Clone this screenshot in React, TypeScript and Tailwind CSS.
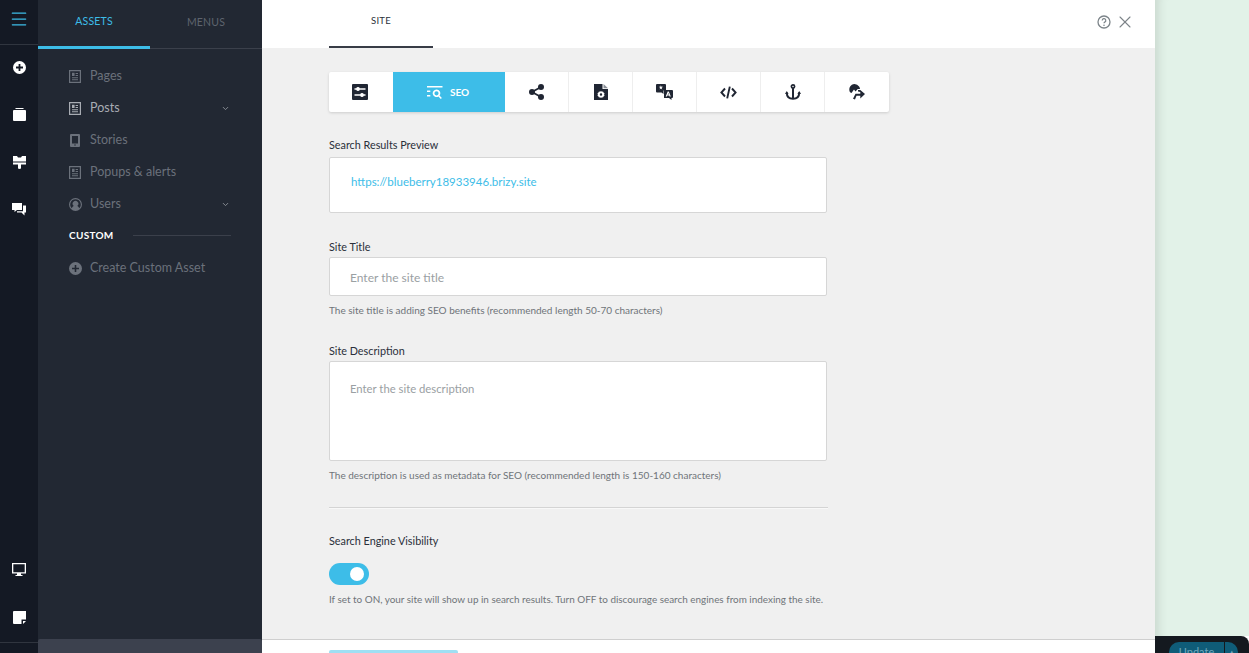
import { ChevronDown, X, Menu } from "lucide-react";

const font = "font-['Lato','Noto_Sans',sans-serif]";

function DocIcon() {
  return (
    <svg viewBox="0 0 12 13" className="w-3 h-[13px]">
      <path fill="currentColor" fillRule="evenodd" d="M0 0h12v13H0zM1.200 1.200v10.600h9.600V1.200zM3 2.800h2.600v3.200H3zM6.600 3H9v1H6.600zM6.600 5H9v1H6.600zM3 7.300h6v1H3zM3 9.200h6v1H3z" />
    </svg>
  );
}

function PhoneIcon() {
  return (
    <svg viewBox="0 0 10 13" className="w-[10px] h-[13px] ml-px">
      <path fill="currentColor" fillRule="evenodd" d="M1 0h8a1 1 0 0 1 1 1v11a1 1 0 0 1-1 1H1a1 1 0 0 1-1-1V1a1 1 0 0 1 1-1zM2 2v7.500h6V2zM4.200 10.400v1.200h1.600v-1.200z" />
    </svg>
  );
}

function UserIcon() {
  return (
    <svg viewBox="0 0 13 13" className="w-[13px] h-[13px]">
      <path fill="currentColor" fillRule="evenodd" d="M6.500 0a6.500 6.500 0 1 1 0 13a6.500 6.500 0 0 1 0-13zM6.500 1.300a5.200 5.200 0 0 0-3.700 8.900c.4-1.200 1.200-2 2-2.300a2.800 2.800 0 1 1 3.400 0c.8.300 1.600 1.100 2 2.300a5.200 5.200 0 0 0-3.700-8.900z" />
    </svg>
  );
}

function SideItem({ icon, label, bright, chevron }: { icon: React.ReactNode; label: string; bright?: boolean; chevron?: boolean }) {
  return (
    <div className={`flex items-center h-8 pl-[31px] pr-[32px] text-[12.500px] ${bright ? "text-[#a8acb3]" : "text-[#6b717b]"}`}>
      <span className="w-[21px] flex items-center justify-start">{icon}</span>
      <span className="flex-1">{label}</span>
      {chevron && <ChevronDown size={9} strokeWidth={2.500} className="text-[#8b9097]" />}
    </div>
  );
}

function RailIcon({ children, className = "" }: { children: React.ReactNode; className?: string }) {
  return <div className={`flex justify-center text-white ${className}`}>{children}</div>;
}

function TabCell({ children }: { children: React.ReactNode }) {
  return <div className="w-16 h-full flex items-center justify-center border-r border-[#eeeeee] last:border-r-0 text-[#202633]">{children}</div>;
}

function Field({ label, gap, children, help }: { label: string; gap: string; children: React.ReactNode; help?: string }) {
  return (
    <div className="w-[498px]">
      <div className={`text-[10.800px] leading-[14px] text-[#2a2f3a] ${gap}`}>{label}</div>
      {children}
      {help && <div className="text-[10px] leading-[14px] text-[#6f7479] mt-[7px]">{help}</div>}
    </div>
  );
}

export default function App() {
  return (
    <div className={`flex w-[1249px] h-[653px] overflow-hidden ${font}`}>
      {/* icon rail */}
      <div className="w-[38px] bg-[#141924] flex flex-col shrink-0">
        <div className="h-[45px] border-b border-[#30353f] flex items-center justify-center pb-[6px]">
          <Menu size={20} strokeWidth={1.500} className="text-[#3dbde8]" />
        </div>
        <RailIcon className="mt-[16px]">
          <svg viewBox="0 0 13 13" className="w-[13px] h-[13px]">
            <path fill="currentColor" fillRule="evenodd" d="M6.500 0a6.500 6.500 0 1 1 0 13a6.500 6.500 0 0 1 0-13zM5.600 3v2.600H3v1.800h2.600V10h1.800V7.400H10V5.600H7.400V3z" />
          </svg>
        </RailIcon>
        <RailIcon className="mt-[34px]">
          <svg viewBox="0 0 13 13" className="w-[13px] h-[13px]">
            <path fill="currentColor" d="M2.500 0h8v1h-8zM1 2h11a1 1 0 0 1 1 1v9a1 1 0 0 1-1 1H1a1 1 0 0 1-1-1V3a1 1 0 0 1 1-1z" />
          </svg>
        </RailIcon>
        <RailIcon className="mt-[35px]">
          <svg viewBox="0 0 13 13" className="w-[13px] h-[13px]">
            <path fill="currentColor" d="M0 0h4l1 1.500h3L9 0h4v5.500H0zM0 6.500h13V8.500H8V12.500L6.500 13 5 12.500V8.500H0z" />
          </svg>
        </RailIcon>
        <RailIcon className="mt-[34px]">
          <svg viewBox="0 0 14 13" className="w-[14px] h-[13px]">
            <path fill="currentColor" d="M0 0h10v7H5L2.500 9V7H0zM11 2.500h3V9.500h-1.500v3L9.500 9.500H5V8.200h6z" />
          </svg>
        </RailIcon>
        <div className="flex-1" />
        <RailIcon className="mb-[35px]">
          <svg viewBox="0 0 14 13" className="w-[14px] h-[13px]">
            <path fill="currentColor" fillRule="evenodd" d="M0 0h14v10.500H9V12h1.500v1h-7v-1H5v-1.500H0zM1.300 1.300v7.900h11.400V1.300z" />
          </svg>
        </RailIcon>
        <RailIcon className="mb-[18px]">
          <svg viewBox="0 0 13 13" className="w-[13px] h-[13px]">
            <path fill="currentColor" d="M1 0h12v8.500H8.500V13H1a1 1 0 0 1-1-1V1a1 1 0 0 1 1-1zM10 10h3l-3 3z" />
          </svg>
        </RailIcon>
        <div className="h-[11px] border-t border-[#30353f]" />
      </div>

      {/* sidebar */}
      <div className="w-[224px] bg-[#222833] flex flex-col shrink-0">
        <div className="flex h-[49px] text-[10.500px] tracking-[0.200px] border-b border-[#3b404b]">
          <div className="w-[112px] h-[49px] flex items-center justify-center pb-[3px] text-[#3dbde8] border-b-[3px] border-[#3dbde8]">ASSETS</div>
          <div className="w-[112px] flex items-center justify-center pb-[3px] text-[#5e646e]">MENUS</div>
        </div>
        <div className="pt-[11px]">
          <SideItem icon={<DocIcon />} label="Pages" />
          <SideItem icon={<DocIcon />} label="Posts" bright chevron />
          <SideItem icon={<PhoneIcon />} label="Stories" />
          <SideItem icon={<DocIcon />} label="Popups & alerts" />
          <SideItem icon={<UserIcon />} label="Users" chevron />
        </div>
        <div className="flex items-center h-[32px] pl-[31px] pr-[31px] pb-[1px]">
          <span className="text-[10px] font-bold tracking-[0.300px] text-white">CUSTOM</span>
          <span className="flex-1 ml-[19px] border-t border-[#3b404b]" />
        </div>
        <SideItem
          icon={
            <svg viewBox="0 0 13 13" className="w-[13px] h-[13px]">
              <path fill="currentColor" fillRule="evenodd" d="M6.500 0a6.500 6.500 0 1 1 0 13a6.500 6.500 0 0 1 0-13zM5.700 3v2.700H3v1.600h2.700V10h1.600V7.300H10V5.700H7.300V3z" />
            </svg>
          }
          label="Create Custom Asset"
        />
        <div className="flex-1" />
        <div className="h-[14px] bg-[#3c414e] rounded-t-[2px]" />
      </div>

      {/* main panel */}
      <div className="w-[893px] flex flex-col shrink-0 bg-[#f0f0f0]">
        <div className="h-[48px] bg-white flex pl-[67px] pr-[20px] justify-between">
          <div className="w-[104px] h-[48px] border-b-2 border-[#383c46] flex items-center justify-center pb-[3px] text-[9.500px] tracking-[0.300px] text-[#2a2f3a]">SITE</div>
          <div className="flex items-center gap-[4px] pb-[4px] text-[#7c8489]">
            <svg viewBox="0 0 14 14" className="w-[14px] h-[14px]">
              <circle cx="7" cy="7" r="6" fill="none" stroke="currentColor" strokeWidth="1.300" />
              <path d="M5.200 5.500a1.800 1.800 0 1 1 2.600 1.600c-.6.300-.8.600-.8 1.200" fill="none" stroke="currentColor" strokeWidth="1.200" />
              <circle cx="7" cy="10.200" r=".8" fill="currentColor" />
            </svg>
            <X size={20} strokeWidth={1.300} />
          </div>
        </div>

        <div className="flex-1 pl-[67px] pt-[24px]">
          <div className="flex w-[560px] h-10 bg-white rounded-[2px] shadow-[0_1px_3px_rgba(0,0,0,0.15)] overflow-hidden">
            <div className="w-16 h-full flex items-center justify-center pr-[2px] text-[#202633]">
              <svg viewBox="0 0 16 16" className="w-4 h-4">
                <path fill="currentColor" fillRule="evenodd" d="M1 0h14a1 1 0 0 1 1 1v14a1 1 0 0 1-1 1H1a1 1 0 0 1-1-1V1a1 1 0 0 1 1-1zM2.500 4.300v1.400h1.700a1.900 1.900 0 0 0 3.600 0h5.700V4.300H7.800a1.900 1.900 0 0 0-3.600 0zM2.500 10.300v1.400h5.700a1.900 1.900 0 0 0 3.600 0h1.700v-1.400h-1.700a1.900 1.900 0 0 0-3.600 0z" />
              </svg>
            </div>
            <div className="w-[112px] h-full bg-[#3dbde8] flex items-center justify-center gap-[7px] pr-[2px] text-white text-[10px] font-bold">
              <svg viewBox="0 0 16 13" className="w-4 h-[13px]">
                <path fill="currentColor" fillRule="evenodd" d="M0 0h15.500v1.500H0zM0 4.500h3.300V6H0zM0 9h3.300v1.500H0zM9.500 3.500a3.800 3.800 0 0 1 3 6.100l2.400 2.300-1.100 1.100-2.400-2.400A3.800 3.800 0 1 1 9.500 3.500zM9.500 5.200a2.100 2.100 0 1 0 0 4.200a2.100 2.100 0 0 0 0-4.200z" />
              </svg>
              SEO
            </div>
            <TabCell>
              <svg viewBox="0 0 15 16" className="w-[15px] h-4">
                <circle cx="12" cy="3" r="3" fill="currentColor" />
                <circle cx="3" cy="8" r="3" fill="currentColor" />
                <circle cx="12" cy="13" r="3" fill="currentColor" />
                <path d="M12 3 3 8l9 5" fill="none" stroke="currentColor" strokeWidth="1.800" />
              </svg>
            </TabCell>
            <TabCell>
              <svg viewBox="0 0 14 16" className="w-[14px] h-4">
                <path fill="currentColor" fillRule="evenodd" d="M0 0h8.500v5H14v11H0zM7 6.800l.8.900 1.200-.2.500 1.100 1 .7-.4 1.200.4 1.200-1 .7-.5 1.100-1.200-.2-.8.900-.8-.9-1.200.2-.5-1.100-1-.7.4-1.200-.4-1.200 1-.7.5-1.100 1.200.2zM7 9.300a1.200 1.200 0 1 0 0 2.400a1.200 1.200 0 0 0 0-2.400z" />
                <path fill="#8a8f97" d="M9.500 0 14 4.200H9.500z" />
              </svg>
            </TabCell>
            <TabCell>
              <svg viewBox="0 0 17 16" className="w-[17px] h-4">
                <path fill="currentColor" d="M1 0h8a1 1 0 0 1 1 1v5.500H7.500V10l-2-1.500H1a1 1 0 0 1-1-1V1a1 1 0 0 1 1-1z" />
                <path fill="currentColor" fillRule="evenodd" d="M8 6h8a1 1 0 0 1 1 1v6a1 1 0 0 1-1 1h-.5v2L13 14H8zM11.700 7.500 9.700 12.500h1.200l.4-1.100h1.900l.4 1.100h1.200l-2-5zM12.300 9.100l.6 1.400h-1.200z" />
                <path fill="#fff" d="M4.900 1.300 5.400 2.800H7.100L5.700 3.800 6.200 5.400 4.900 4.400 3.600 5.400 4.100 3.800 2.700 2.800H4.400z" />
              </svg>
            </TabCell>
            <TabCell>
              <svg viewBox="0 0 17 13" className="w-[17px] h-[13px]" fill="none" stroke="currentColor" strokeWidth="1.900">
                <path d="M5 2.500 1.400 6.500 5 10.500M12 2.500l3.600 4-3.600 4M9.800.6 7.200 12.400" />
              </svg>
            </TabCell>
            <TabCell>
              <svg viewBox="0 0 16 16" className="w-4 h-4" fill="none" stroke="currentColor" strokeWidth="2">
                <circle cx="8" cy="2.500" r="1.600" strokeWidth="1.700" />
                <path d="M8 4v11M1.800 8.500c0 4 2.500 6.300 6.200 6.300s6.200-2.300 6.200-6.300" />
                <path fill="currentColor" stroke="none" d="M0 10 1.800 7 3.600 10zM12.400 10 14.200 7 16 10z" />
              </svg>
            </TabCell>
            <TabCell>
              <svg viewBox="0 0 16 16" className="w-4 h-4">
                <path fill="currentColor" d="M5.500 0a5.500 5.500 0 0 1 4.600 2.500c.6.900.9 1.700.9 2.500H8.800L6.500 7.500 5 5.500 2.500 9 1 8.200A5.500 5.500 0 0 1 5.500 0z" />
                <path fill="currentColor" d="M9 6h2.300L16 10l-4.700 4.500v-2.700H7.500L6 15.500 4 14.800 6.500 9.800h4.800V8L9 7.500z" />
              </svg>
            </TabCell>
          </div>

          <div className="mt-[26px] flex flex-col">
            <Field label="Search Results Preview" gap="mb-[5px]">
              <div className="h-[56px] bg-white border border-[#d6d6d6] rounded-[2px] pl-[21px] pt-[15px] text-[11.500px] leading-[17px] text-[#3dbde8]">
                https://blueberry18933946.brizy.site
              </div>
            </Field>
            <div className="mt-[27px]">
              <Field label="Site Title" gap="mb-[3px]" help="The site title is adding SEO benefits (recommended length 50-70 characters)">
                <div className="h-[39px] bg-white border border-[#d6d6d6] rounded-[2px] pl-5 pt-[2px] flex items-center text-[12px] text-[#9aa0a3]">Enter the site title</div>
              </Field>
            </div>
            <div className="mt-[27px]">
              <Field label="Site Description" gap="mb-[3px]" help="The description is used as metadata for SEO (recommended length is 150-160 characters)">
                <div className="h-[100px] bg-white border border-[#d6d6d6] rounded-[2px] pl-5 pt-[18px] text-[11.300px] leading-[17px] text-[#9aa0a3]">Enter the site description</div>
              </Field>
            </div>
            <div className="w-[499px] border-t border-b border-t-[#d4d4d4] border-b-[#f8f8f8] mt-[25px]" />
            <div className="mt-[25px]">
              <Field label="Search Engine Visibility" gap="mb-[15px]">
                <div className="w-10 h-[22px] bg-[#3dbde8] rounded-full flex items-center justify-end pr-[5px]">
                  <div className="w-[14px] h-[14px] bg-white rounded-full" />
                </div>
                <div className="text-[9.920px] leading-[14px] text-[#6f7479] mt-[7px] whitespace-nowrap">
                  If set to ON, your site will show up in search results. Turn OFF to discourage search engines from indexing the site.
                </div>
              </Field>
            </div>
          </div>
        </div>

        <div className="h-[14px] bg-white border-t border-[#cfcfcf] pl-[67px] pt-[10px]">
          <div className="w-[129px] h-[3px] bg-[#9fdff3] rounded-t-[2px]" />
        </div>
      </div>

      {/* right edge */}
      <div className="flex-1 flex flex-col">
        <div className="flex-1 bg-[#e2f2e8] shadow-[inset_12px_0_10px_-8px_rgba(0,0,0,0.1)]" />
        <div className="h-[17px] bg-[#14191f] rounded-tr-[8px] pl-[14px] pt-[6px]">
          <div className="flex w-[69px] h-[11px] bg-[#0f5c78] rounded-t-[10px] text-[#6fa8bd] text-[11px] leading-[20px] overflow-hidden">
            <span className="w-[56px] text-center border-r border-[#14191f]">Update</span>
            <span className="flex-1 text-center">▴</span>
          </div>
        </div>
      </div>
    </div>
  );
}
